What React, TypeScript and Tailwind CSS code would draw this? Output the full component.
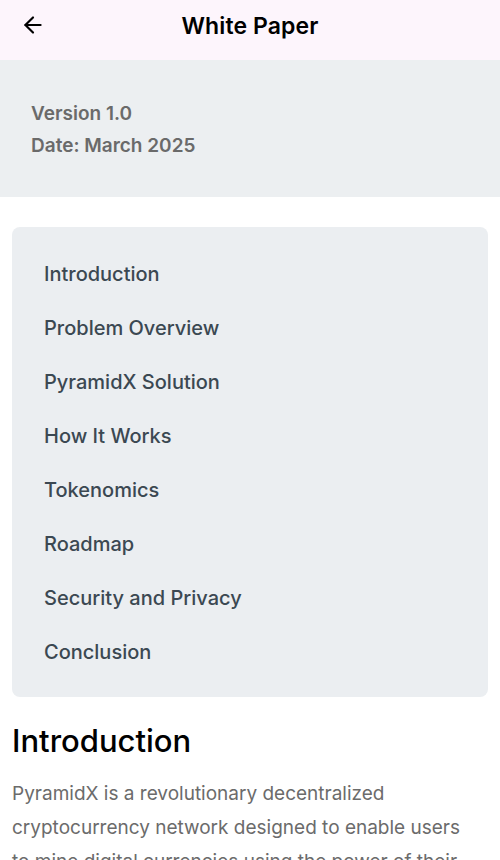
import { ArrowLeft } from 'lucide-react';

const sections = [
  'Introduction',
  'Problem Overview',
  'PyramidX Solution',
  'How It Works',
  'Tokenomics',
  'Roadmap',
  'Security and Privacy',
  'Conclusion',
];

export default function App() {
  return (
    <div className="w-[500px] h-[860px] overflow-hidden bg-white font-['Inter',sans-serif]">
      <header className="relative flex h-[60px] items-start justify-center bg-[#fdf5fc] pt-[10px]">
        <button className="absolute left-[20px] top-[12px] p-0 text-black">
          <ArrowLeft size={26} strokeWidth={2} />
        </button>
        <h1 className="text-[23px] font-semibold leading-[32px] tracking-[0.1px] text-black">White Paper</h1>
      </header>

      <div className="flex h-[137px] flex-col justify-center gap-[9px] bg-[#eceff1] px-[31px] pt-[2px]">
        <p className="text-[19px] font-semibold leading-[23px] text-[#6a6a6a]">Version 1.0</p>
        <p className="text-[19px] font-semibold leading-[23px] text-[#6a6a6a]">Date: March 2025</p>
      </div>

      <div className="px-[12px] pt-[30px]">
        <nav className="flex flex-col rounded-[8px] bg-[#ebeef1] px-[32px] py-[19px]">
          {sections.map((s) => (
            <a key={s} className="flex h-[54px] items-center pt-[2px] text-[20px] font-medium text-[#3b4852]">
              {s}
            </a>
          ))}
        </nav>

        <h2 className="mt-[24px] text-[31px] font-medium leading-[40px] text-black">Introduction</h2>
        <p className="mt-[16px] max-w-[462px] text-[19px] leading-[34px] text-[#6b6b6b]">
          PyramidX is a revolutionary decentralized cryptocurrency network designed to enable users to mine digital currencies using the power of their mobile devices.
        </p>
      </div>
    </div>
  );
}
